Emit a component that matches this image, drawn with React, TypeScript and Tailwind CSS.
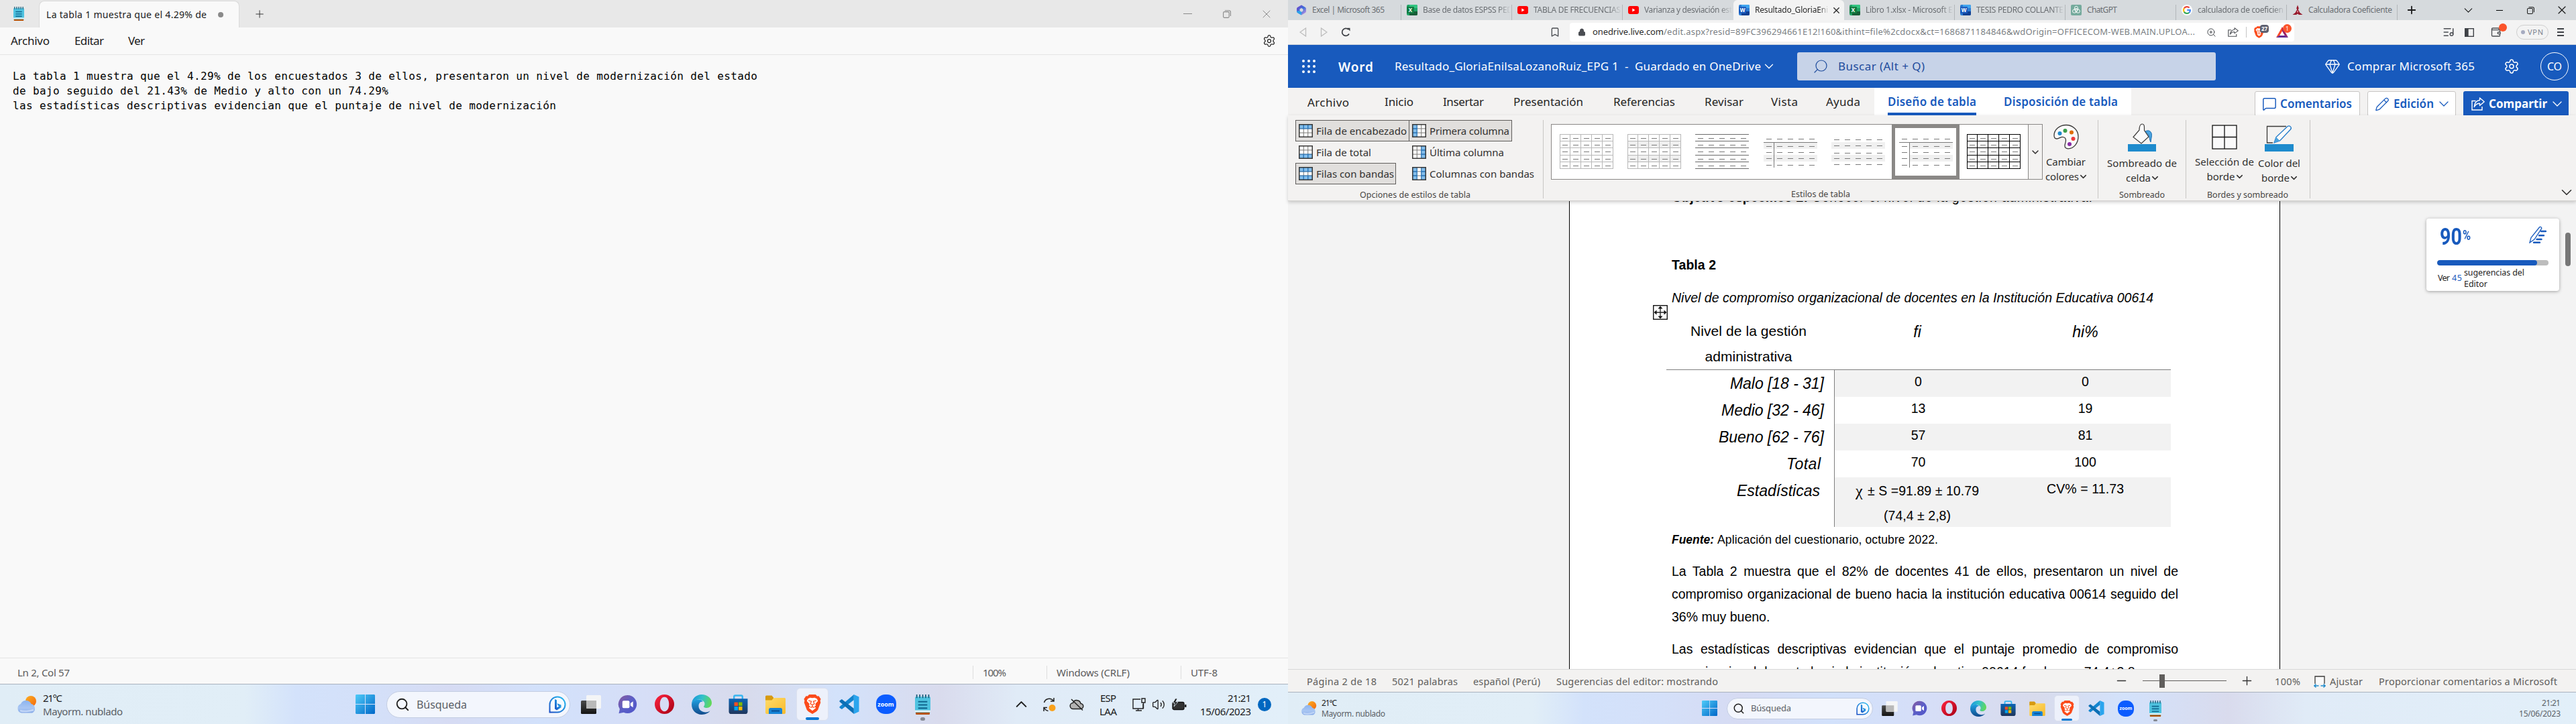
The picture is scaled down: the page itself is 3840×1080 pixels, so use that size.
import { useLayoutEffect, useRef, useState } from "react";
import type { ReactNode } from "react";
import {
  Bookmark,
  ChevronDown,
  ChevronUp,
  Gem,
  ListMusic,
  Lock,
  MessageSquare,
  Minus,
  Pencil,
  Plus,
  Search,
  Settings,
  Wallet,
  X,
  ZoomIn,
  Volume2,
} from "lucide-react";

/** One line of text whose tracking is adjusted so that it spans `w` pixels. */
function Fit({ w, children, className = "" }: { w: number; children: string; className?: string }) {
  const ref = useRef<HTMLSpanElement>(null);
  const [tracking, setTracking] = useState(0);
  useLayoutEffect(() => {
    const el = ref.current;
    if (!el) return;
    const previous = el.style.letterSpacing;
    el.style.letterSpacing = "0px";
    const natural = el.getBoundingClientRect().width;
    el.style.letterSpacing = previous;
    setTracking((w - natural) / Math.max(1, children.length - 1));
  }, [w, children]);
  return (
    <span className={`inline-block shrink-0 whitespace-pre ${className}`} style={{ width: w }}>
      <span ref={ref} style={{ letterSpacing: `${tracking}px` }}>
        {children}
      </span>
    </span>
  );
}

/* ---------- small glyphs ---------- */

function Restore({ className = "" }: { className?: string }) {
  return (
    <svg viewBox="0 0 12 12" className={`shrink-0 ${className}`} fill="none" stroke="currentColor" strokeWidth="1.1">
      <rect x="0.6" y="2.6" width="8.6" height="8.8" rx="1.6" />
      <path d="M2.8 0.7h6.4a2.2 2.2 0 0 1 2.2 2.2v6.2" />
    </svg>
  );
}

function NotepadIcon({ className = "" }: { className?: string }) {
  return (
    <svg viewBox="0 0 22 28" className={`shrink-0 ${className}`} preserveAspectRatio="none">
      <rect x="1" y="24" width="20" height="4" rx="1" fill="#b45309" />
      <rect x="0" y="3" width="22" height="22" rx="1.5" fill="#4fc3e0" />
      <path d="M0 22h22v2.500H0z" fill="#e9f2f5" />
      <path d="M2.500 0v5M6.800 0v5M11 0v5M15.200 0v5M19.500 0v5" stroke="#1b5e7b" strokeWidth="1.700" />
      <path d="M4.500 10h13M4.500 14.500h13M4.500 19h13" stroke="#11678f" strokeWidth="1.900" />
    </svg>
  );
}

function WeatherIcon({ className = "" }: { className?: string }) {
  return (
    <svg viewBox="0 0 30 26" className={`shrink-0 ${className}`}>
      <defs>
        <linearGradient id="sun" x1="0" y1="0" x2="1" y2="1">
          <stop offset="0" stopColor="#fbb024" />
          <stop offset="1" stopColor="#f4660b" />
        </linearGradient>
        <linearGradient id="cloud" x1="0" y1="0" x2="0" y2="1">
          <stop offset="0" stopColor="#8db4ee" />
          <stop offset="0.600" stopColor="#a9c6f3" />
          <stop offset="1" stopColor="#86aae8" />
        </linearGradient>
      </defs>
      <circle cx="21" cy="8" r="8" fill="url(#sun)" />
      <path d="M7 25.500a7 7 0 0 1-1-13.400A8.500 8.500 0 0 1 21.500 12 7.200 7.200 0 0 1 23 25.500z" fill="url(#cloud)" />
      <path d="M5 22c5 2 14 1 20-1" stroke="#d5e4fb" strokeWidth="2.500" fill="none" opacity="0.700" />
    </svg>
  );
}

function WindowsIcon({ className = "" }: { className?: string }) {
  return (
    <svg viewBox="0 0 30 30" className={`shrink-0 ${className}`}>
      <defs>
        <linearGradient id="win" x1="0" y1="0" x2="1" y2="1">
          <stop offset="0" stopColor="#4fcbf8" />
          <stop offset="1" stopColor="#0067c8" />
        </linearGradient>
      </defs>
      <path d="M1 0h13.500v14.500H0V1zM15.500 0H29l1 1v13.500H15.500zM0 15.500h14.500V30H1l-1-1zM15.500 15.500H30V29l-1 1H15.500z" fill="url(#win)" />
    </svg>
  );
}

function BingIcon({ className = "" }: { className?: string }) {
  return (
    <svg viewBox="0 0 26 26" className={`shrink-0 ${className}`}>
      <defs>
        <linearGradient id="bing" x1="0" y1="1" x2="1" y2="0">
          <stop offset="0" stopColor="#1b4fc4" />
          <stop offset="1" stopColor="#28c1f2" />
        </linearGradient>
      </defs>
      <path d="M1.500 24.500V13A11.500 11.500 0 1 1 13 24.500z" fill="#f4faff" stroke="url(#bing)" strokeWidth="2" />
      <path d="M9 5l3 1.200v11.300l3.500-2-1.700-.9-1.300-3.300 6 2.200v3.800L12 21.500l-3-2z" fill="url(#bing)" />
    </svg>
  );
}

function TaskViewIcon({ className = "" }: { className?: string }) {
  return (
    <svg viewBox="0 0 30 28" className={`shrink-0 ${className}`}>
      <defs>
        <linearGradient id="tv" x1="0" y1="0" x2="0" y2="1">
          <stop offset="0" stopColor="#4a4a4a" />
          <stop offset="1" stopColor="#141414" />
        </linearGradient>
      </defs>
      <rect x="0" y="8" width="23" height="20" rx="1.500" fill="url(#tv)" />
      <rect x="8" y="0" width="22" height="20" rx="1.500" fill="#f5f5f5" opacity="0.950" />
      <path d="M8 8h15v12H9.500A1.500 1.500 0 0 1 8 18.500z" fill="#b9b9b9" />
    </svg>
  );
}

function ChatIcon({ className = "" }: { className?: string }) {
  return (
    <svg viewBox="0 0 30 30" className={`shrink-0 ${className}`}>
      <defs>
        <linearGradient id="chat" x1="0" y1="0" x2="1" y2="1">
          <stop offset="0" stopColor="#8a5a9e" />
          <stop offset="0.500" stopColor="#5b5fc7" />
          <stop offset="1" stopColor="#4f54c9" />
        </linearGradient>
      </defs>
      <path d="M15 1a14 14 0 1 1-6 26.600L1.500 29.300 3 22.500A14 14 0 0 1 15 1z" fill="url(#chat)" />
      <rect x="7" y="9.500" width="11" height="11.500" rx="2" fill="#fff" />
      <path d="M19.500 13.500l4-3v9.500l-4-3z" fill="#fff" />
    </svg>
  );
}

function OperaIcon({ className = "" }: { className?: string }) {
  return (
    <svg viewBox="0 0 30 30" className={`shrink-0 ${className}`}>
      <defs>
        <linearGradient id="opera" x1="0" y1="0" x2="1" y2="1">
          <stop offset="0" stopColor="#ff2440" />
          <stop offset="1" stopColor="#a50014" />
        </linearGradient>
      </defs>
      <path
        fillRule="evenodd"
        d="M15 0a15 15 0 1 1 0 30 15 15 0 0 1 0-30zM15 4C10.500 4 8 9 8 15s2.500 11 7 11 7-5 7-11S19.500 4 15 4z"
        fill="url(#opera)"
      />
    </svg>
  );
}

function EdgeIcon({ className = "" }: { className?: string }) {
  return (
    <svg viewBox="0 0 30 30" className={`shrink-0 ${className}`}>
      <defs>
        <linearGradient id="edgeTop" x1="0" y1="0.300" x2="1" y2="0.500">
          <stop offset="0" stopColor="#1a96dc" />
          <stop offset="0.500" stopColor="#33c1c9" />
          <stop offset="1" stopColor="#62d957" />
        </linearGradient>
        <linearGradient id="edgeLow" x1="0" y1="0" x2="0" y2="1">
          <stop offset="0" stopColor="#1f9fe0" />
          <stop offset="1" stopColor="#114a8b" />
        </linearGradient>
      </defs>
      <path d="M15 0c8.500 0 15 5.800 15 12.500 0 4.500-3.500 7.500-7.500 7.500-3.500 0-4.500-1.300-4.500-2 0-.8 1.500-1.500 1.500-4C19.500 10 15 7.500 10.500 7.500 5 7.500.8 11.500 0 15 0 6.500 6.700 0 15 0z" fill="url(#edgeTop)" />
      <path d="M0 15c.5-4.500 5-7.500 10-7.500 3 0 5.500 1.200 7 3-4-.6-6.500 2.500-6.500 6.500 0 6 5 9.500 10.500 9.500 3 0 5.500-1.200 6.500-2.200C25.500 27.500 20.800 30 15 30 6.700 30 0 23.500 0 15z" fill="url(#edgeLow)" />
    </svg>
  );
}

function StoreIcon({ className = "" }: { className?: string }) {
  return (
    <svg viewBox="0 0 30 30" className={`shrink-0 ${className}`}>
      <defs>
        <linearGradient id="store" x1="0" y1="0" x2="0" y2="1">
          <stop offset="0" stopColor="#0b64b5" />
          <stop offset="1" stopColor="#20365c" />
        </linearGradient>
      </defs>
      <path d="M8.500 8V3.500a2 2 0 0 1 2-2h9a2 2 0 0 1 2 2V8" fill="none" stroke="#38b6f1" strokeWidth="2.500" />
      <path d="M.500 6.500h29V26a4 4 0 0 1-4 4h-21a4 4 0 0 1-4-4z" fill="url(#store)" />
      <path d="M8.800 12h5.700v5.700H8.800z" fill="#f25022" />
      <path d="M15.500 12h5.700v5.700h-5.700z" fill="#7fba00" />
      <path d="M8.800 18.700h5.700v5.700H8.800z" fill="#00a4ef" />
      <path d="M15.500 18.700h5.700v5.700h-5.700z" fill="#ffb900" />
    </svg>
  );
}

function FolderIcon({ className = "" }: { className?: string }) {
  return (
    <svg viewBox="0 0 30 28" className={`shrink-0 ${className}`}>
      <defs>
        <linearGradient id="folder" x1="0" y1="0" x2="1" y2="1">
          <stop offset="0" stopColor="#ffdc6b" />
          <stop offset="1" stopColor="#f7ba2c" />
        </linearGradient>
      </defs>
      <path d="M0 2a1.500 1.500 0 0 1 1.500-1.500h8L12 3.500V10H0z" fill="#d79a10" />
      <path d="M0 7.500h9.500l3-3.500H28.500A1.500 1.500 0 0 1 30 5.500V26a2 2 0 0 1-2 2H2a2 2 0 0 1-2-2z" fill="url(#folder)" />
      <path d="M5 28v-6.500A2.500 2.500 0 0 1 7.500 19h15a2.500 2.500 0 0 1 2.500 2.500V28z" fill="#1583d6" />
      <path d="M9 23.500h12" stroke="#0a4c8f" strokeWidth="1.800" />
    </svg>
  );
}

function BraveIcon({ className = "" }: { className?: string }) {
  return (
    <svg viewBox="0 0 26 30" className={`shrink-0 ${className}`}>
      <path d="M8 0h10l2.500 2.700 2.300-.3L26 7l-1 2.500.7 3-4.200 11.300-2.500 2.700L13 30l-6-3.500-2.500-2.700L.3 12.500l.7-3L0 7l3.200-4.600 2.300.3z" fill="#fb4b1b" />
      <path
        d="M13 5.500l3.500-.7 3.700 1.900 1.300 3.300-4 4.500.7 2.500-2.200 2 2.500 1.800L13 25l-5.500-4.200L10 19l-2.200-2 .7-2.500-4-4.500 1.300-3.300 3.700-1.900z"
        fill="#fff"
      />
      <path d="M7 9.500l4.500 1-1.500 4 3 1.500 3-1.500-1.500-4 4.500-1M13 16v3.500M10 20l3-1 3 1" stroke="#fb4b1b" strokeWidth="1.300" fill="none" />
    </svg>
  );
}

function VsCodeIcon({ className = "" }: { className?: string }) {
  return (
    <svg viewBox="0 0 30 30" className={`shrink-0 ${className}`}>
      <path d="M22 0L30 3.500v23L22 30z" fill="#2aa5ee" />
      <path d="M22 0v8.500L3.500 22.800 0 20.500v-1.500z" fill="#1385cf" />
      <path d="M22 30v-8.500L3.500 7.200 0 9.500V11z" fill="#0b6fb5" />
    </svg>
  );
}

function ZoomIcon({ small = false, className = "" }: { small?: boolean; className?: string }) {
  return (
    <span
      className={`flex shrink-0 items-center justify-center rounded-[45%] bg-[#0b5cff] font-['Open_Sans',sans-serif] leading-none font-bold text-white ${small ? "text-[7px]" : "text-[9px]"} ${className}`}
    >
      zoom
    </span>
  );
}

function OfficeIcon({ kind }: { kind: "W" | "X" }) {
  const word = kind === "W";
  return (
    <span className={`relative block h-4 w-4 shrink-0 overflow-hidden rounded-[2px] ${word ? "bg-[#2b7cd3]" : "bg-[#21a366]"}`}>
      <span className={`absolute top-0 right-0 h-[5px] w-3 ${word ? "bg-[#41a5ee]" : "bg-[#33c481]"}`} />
      <span className={`absolute right-0 bottom-0 h-[6px] w-3 ${word ? "bg-[#103f91]" : "bg-[#185c37]"}`} />
      <span
        className={`absolute top-[3px] left-0 flex h-[10px] w-[11px] items-center justify-center rounded-[1px] font-['Open_Sans',sans-serif] text-[8px] leading-none font-bold text-white ${word ? "bg-[#185abd]" : "bg-[#107c41]"}`}
      >
        {kind}
      </span>
    </span>
  );
}

function YouTubeIcon() {
  return (
    <svg viewBox="0 0 16 12" className="h-3 w-4 shrink-0">
      <rect width="16" height="12" rx="3" fill="#ff0000" />
      <path d="M6.300 3.500v5l4.200-2.500z" fill="#fff" />
    </svg>
  );
}

function M365Icon() {
  return (
    <svg viewBox="0 0 16 16" className="h-4 w-4 shrink-0">
      <defs>
        <linearGradient id="m365" x1="0" y1="0" x2="1" y2="1">
          <stop offset="0" stopColor="#7b3fc9" />
          <stop offset="0.500" stopColor="#3b6fd9" />
          <stop offset="1" stopColor="#e39ae0" />
        </linearGradient>
      </defs>
      <path fillRule="evenodd" d="M8 .5l5.500 3.200c1 .6 1.500 1.500 1.500 2.500v3.600c0 1-.5 1.900-1.500 2.500L8 15.500l-5.500-3.200C1.500 11.700 1 10.800 1 9.800V6.200c0-1 .5-1.900 1.500-2.500zM8 5L5.500 6.500v3L8 11l2.500-1.500v-3z" fill="url(#m365)" />
      <path d="M1 9.500l4.500-.2L8 11v4.500l-5.500-3.200C1.500 11.500 1 10.500 1 9.500z" fill="#2ba5ea" />
    </svg>
  );
}

function ChatGptIcon() {
  return (
    <svg viewBox="0 0 16 16" className="h-4 w-4 shrink-0">
      <rect width="16" height="16" rx="2" fill="#74aa9c" />
      <g fill="none" stroke="#fff" strokeWidth="0.900">
        <ellipse cx="8" cy="5.800" rx="2.600" ry="3.600" />
        <ellipse cx="8" cy="5.800" rx="2.600" ry="3.600" transform="rotate(120 8 8)" />
        <ellipse cx="8" cy="5.800" rx="2.600" ry="3.600" transform="rotate(240 8 8)" />
      </g>
    </svg>
  );
}

function GoogleIcon() {
  return (
    <svg viewBox="0 0 16 16" className="h-4 w-4 shrink-0">
      <circle cx="8" cy="8" r="8" fill="#fff" />
      <g fill="none" strokeWidth="2.200">
        <path d="M11.600 4.600A4.900 4.900 0 0 0 3.900 5.300" stroke="#ea4335" />
        <path d="M3.800 5.300a5 5 0 0 0 0 5.300" stroke="#fbbc05" />
        <path d="M3.800 10.600a4.900 4.900 0 0 0 7.400 1.200" stroke="#34a853" />
        <path d="M11.200 11.800A4.900 4.900 0 0 0 12.900 8H8.200" stroke="#4285f4" />
      </g>
    </svg>
  );
}

function RedMarkIcon() {
  return (
    <svg viewBox="0 0 16 16" className="h-4 w-4 shrink-0">
      <path d="M8 .5l1.800 5-1 1.500 2.700 5 4 3H10L8 13.500 6 15H.5l4-3L7.200 7l-1-1.500z" fill="#96192b" />
      <path d="M8 8l1 2.500L8 12l-1-1.500z" fill="#e9a0a8" />
    </svg>
  );
}

/* ---------- Notepad window ---------- */

function Notepad() {
  return (
    <section className="flex h-[1020px] flex-col bg-[#f9f9f9] text-[#1b1b1b]">
      <div className="flex h-[41px] shrink-0 items-center bg-[#e8e8e8]">
        <NotepadIcon className="ml-[20px] h-[21px] w-[16px]" />
        <div className="mt-px ml-[22px] flex h-10 w-[299px] items-center rounded-t-lg border border-b-0 border-[#dadada] bg-[#f9f9f9]">
          <Fit w={239} className="ml-[10px] text-[14px]">La tabla 1 muestra que el 4.29% de</Fit>
          <span className="ml-[17px] h-2 w-2 rounded-full bg-[#8a8a8a]" />
        </div>
        <Plus className="ml-[21px] h-[18px] w-[18px] text-[#333]" strokeWidth={1.3} />
        <div className="mr-[26px] ml-auto flex items-center text-[#8a8a8a]">
          <span className="h-px w-[13px] bg-[#8a8a8a]" />
          <Restore className="ml-[46px] h-3 w-3" />
          <X className="-mr-1 ml-[43px] h-[20px] w-[20px]" strokeWidth={1.2} />
        </div>
      </div>
      <div className="flex h-[41px] shrink-0 items-center border-b border-[#e5e5e5] text-[17px]">
        <Fit w={58} className="ml-[16px]">Archivo</Fit>
        <Fit w={44} className="ml-[37px]">Editar</Fit>
        <Fit w={25} className="ml-[36px]">Ver</Fit>
        <Settings className="mr-[18px] ml-auto h-5 w-5 text-[#222]" strokeWidth={1.5} />
      </div>
      <div className="min-h-0 flex-1 pt-[21px] pl-[19px] font-['DejaVu_Sans_Mono',monospace] text-[16px] leading-[22px] text-black">
        <Fit w={1110} className="block!">
          La tabla 1 muestra que el 4.29% de los encuestados 3 de ellos, presentaron un nivel de modernización del estado
        </Fit>
        <Fit w={560} className="block!">de bajo seguido del 21.43% de Medio y alto con un 74.29%</Fit>
        <Fit w={810} className="block!">las estadísticas descriptivas evidencian que el puntaje de nivel de modernización</Fit>
      </div>
      <div className="flex h-[39px] shrink-0 items-center border-t border-[#e5e5e5] pt-[4px] text-[15px] text-[#5c5c5c]">
        <Fit w={78} className="ml-[26px]">Ln 2, Col 57</Fit>
        <div className="ml-auto flex h-5 w-[110px] items-center border-l border-[#dedede] pl-[14px]">
          <Fit w={35}>100%</Fit>
        </div>
        <div className="flex h-5 w-[200px] items-center border-l border-[#dedede] pl-[14px]">
          <Fit w={109}>Windows (CRLF)</Fit>
        </div>
        <div className="flex h-5 w-[160px] items-center border-l border-[#dedede] pl-[14px]">
          <Fit w={40}>UTF-8</Fit>
        </div>
      </div>
    </section>
  );
}

/* ---------- browser chrome ---------- */

type Tab = { icon: ReactNode; title: string; w: number; active?: boolean; noSep?: boolean };

const tabs: Tab[] = [
  { icon: <M365Icon />, title: "Excel | Microsoft 365", w: 108 },
  { icon: <OfficeIcon kind="X" />, title: "Base de datos ESPSS PED", w: 134 },
  { icon: <YouTubeIcon />, title: "TABLA DE FRECUENCIAS", w: 130 },
  { icon: <YouTubeIcon />, title: "Varianza y desviación est", w: 131, noSep: true },
  { icon: <OfficeIcon kind="W" />, title: "Resultado_GloriaEnil", w: 112, active: true, noSep: true },
  { icon: <OfficeIcon kind="X" />, title: "Libro 1.xlsx - Microsoft E", w: 130 },
  { icon: <OfficeIcon kind="W" />, title: "TESIS PEDRO COLLANTE", w: 130 },
  { icon: <ChatGptIcon />, title: "ChatGPT", w: 45 },
  { icon: <GoogleIcon />, title: "calculadora de coeficien", w: 128 },
  { icon: <RedMarkIcon />, title: "Calculadora Coeficiente", w: 125 },
];

function TabStrip() {
  return (
    <div className="flex h-[30px] shrink-0 items-end bg-[#d6dadd] pl-1 text-[12px] text-[#6b6f73]">
      {tabs.map((t) => (
        <div
          key={t.title}
          className={`flex h-[30px] w-[165px] shrink-0 items-center pl-2 ${t.active ? "rounded-t-md bg-[#f3f3f3] text-[#2b2b2b]" : ""}`}
        >
          {t.icon}
          <div
            className={`ml-2 overflow-hidden ${t.active ? "w-[112px] [mask-image:linear-gradient(to_right,#000_86%,transparent_98%)]" : t.w > 126 ? "w-[131px] [mask-image:linear-gradient(to_right,#000_86%,transparent)]" : "w-[131px]"}`}
          >
            <Fit w={t.w}>{t.title}</Fit>
          </div>
          {t.active && <X className="ml-[2px] h-[15px] w-[15px]" strokeWidth={2.2} />}
          {!t.noSep && <span className="ml-auto h-[23px] w-px self-end bg-[#b3b7ba]" />}
        </div>
      ))}
      <div className="flex h-[30px] flex-1 items-center text-[#1b1b1b]">
        <Plus className="ml-[12px] h-[18px] w-[18px]" strokeWidth={2.4} />
        <ChevronDown className="ml-[65px] h-[21px] w-[21px]" strokeWidth={1.3} />
        <span className="ml-[31px] h-px w-[10px] bg-black" />
        <Restore className="ml-[36px] h-[11px] w-[11px]" />
        <X className="ml-[31px] h-[20px] w-[20px]" strokeWidth={1.4} />
      </div>
    </div>
  );
}

function ShareArrow({ className = "" }: { className?: string }) {
  return (
    <svg viewBox="0 0 20 20" className={`shrink-0 ${className}`} fill="none" stroke="currentColor" strokeWidth="1.400" preserveAspectRatio="none">
      <path d="M6.500 5.500H1v13.500h15v-5" />
      <path d="M12.500 1l6.700 5.800-6.700 5.700V9.300C8.500 9.300 6 11 4.300 14.500c.4-5.500 3.500-9.500 8.200-10z" strokeLinejoin="round" />
    </svg>
  );
}

function Toolbar() {
  return (
    <div className="flex h-[37px] shrink-0 items-center border-b border-[#cfd4da] bg-[#f3f3f3] text-[#4a4d52]">
      <svg viewBox="0 0 42 14" className="ml-[17px] h-[14px] w-[42px] shrink-0" fill="none" stroke="#bdbdbd" strokeWidth="1.300">
        <path d="M9.500 1v12L1 7z" />
        <path d="M32.500 1v12L41 7z" />
      </svg>
      <svg viewBox="0 0 14 14" className="ml-[20px] h-[14px] w-[14px] shrink-0" fill="none" stroke="#3a3d42" strokeWidth="1.700">
        <path d="M12 9.500A5.500 5.500 0 1 1 11 3" />
        <path d="M9 .8l4.500 0v4.700z" fill="#3a3d42" stroke="none" />
      </svg>
      <Bookmark className="ml-[297px] h-4 w-4" strokeWidth={2} />
      <div className="ml-[14px] flex h-7 w-[1080px] shrink-0 items-center rounded bg-white text-[13px]">
        <Lock className="ml-[12px] h-[12px] w-[12px]" fill="#4a4d52" />
        <Fit w={106} className="ml-[10px] text-[#2b2b2b]">onedrive.live.com</Fit>
        <Fit w={792} className="text-[#7b7f84]">
          /edit.aspx?resid=89FC396294661E12!160&ithint=file%2cdocx&ct=1686871184846&wdOrigin=OFFICECOM-WEB.MAIN.UPLOA...
        </Fit>
        <ZoomIn className="ml-[17px] h-[15px] w-[15px]" strokeWidth={1.6} />
        <ShareArrow className="ml-[17px] h-[14px] w-[16px]" />
        <span className="ml-[11px] h-4 w-px bg-[#c4c4c4]" />
        <div className="relative ml-[11px] h-[18px] w-[16px]">
          <BraveIcon className="h-[18px] w-[15px]" />
          <span className="absolute -top-[2px] left-[9px] flex h-[12px] w-[13px] items-center justify-center rounded-[4px] bg-[#5d6070] text-[8px] leading-none font-bold text-white">
            27
          </span>
        </div>
        <div className="relative ml-[17px] h-[16px] w-[18px]">
          <svg viewBox="0 0 18 16" className="h-4 w-[18px]">
            <path d="M9 0L0 16l9-5.500z" fill="#ff4724" />
            <path d="M9 0l9 16-9-5.500z" fill="#9e1f63" />
            <path d="M0 16l9-6 9 6z" fill="#662d91" />
            <path d="M9 6.500l3.800 6.500H5.200z" fill="#fff" />
          </svg>
          <span className="absolute -top-[4px] left-[10px] flex h-[13px] w-[13px] items-center justify-center rounded-full bg-[#fb542b] text-[8px] leading-none text-white">
            1
          </span>
        </div>
      </div>
      <ListMusic className="ml-[221px] h-[18px] w-[18px]" strokeWidth={2} />
      <svg viewBox="0 0 14 13" className="ml-[15px] h-[13px] w-[14px] shrink-0" fill="none" stroke="#3f4247" strokeWidth="1.400">
        <rect x="0.700" y="0.700" width="12.600" height="11.600" />
        <path d="M.7.7h4.300v11.600H.7z" fill="#3f4247" />
      </svg>
      <div className="relative ml-[24px] h-4 w-[17px]">
        <Wallet className="h-4 w-[17px]" strokeWidth={2} />
        <span className="absolute -top-[5px] left-[13px] h-3 w-3 rounded-full bg-[#fb542b]" />
      </div>
      <div className="ml-[22px] flex h-[22px] w-12 shrink-0 items-center rounded-full border border-[#cfcfcf] text-[11px] text-[#7d8390]">
        <span className="ml-[6px] h-[6px] w-[6px] rounded-full bg-[#a6abc0]" />
        <Fit w={23} className="ml-[4px]">VPN</Fit>
      </div>
      <div className="ml-[13px] flex w-[10px] flex-col gap-[3px]">
        <span className="h-[2px] bg-[#3f4247]" />
        <span className="h-[2px] bg-[#3f4247]" />
        <span className="h-[2px] bg-[#3f4247]" />
      </div>
    </div>
  );
}

/* ---------- Word header and ribbon ---------- */

function WordHeader() {
  return (
    <div className="flex h-16 shrink-0 items-center bg-[#185abd] text-white">
      <div className="ml-[21px] grid grid-cols-3 gap-[4px]">
        {Array.from({ length: 9 }, (_, i) => (
          <span key={i} className="h-[4px] w-[4px] rounded-full bg-white" />
        ))}
      </div>
      <Fit w={52} className="mt-[2px] ml-[34px] text-[19px] font-semibold">Word</Fit>
      <Fit w={546} className="ml-[32px] text-[17px]">{"Resultado_GloriaEnilsaLozanoRuiz_EPG 1  -  Guardado en OneDrive"}</Fit>
      <ChevronDown className="ml-px h-[22px] w-[22px]" strokeWidth={1.4} />
      <div className="ml-[31px] flex h-[42px] w-[624px] shrink-0 items-center rounded-[3px] bg-[#c7d3e8] text-[17px] text-[#1d4b9c]">
        <Search className="ml-[23px] h-[24px] w-[24px] -scale-x-100" strokeWidth={1.2} />
        <Fit w={129} className="ml-[14px]">Buscar (Alt + Q)</Fit>
      </div>
      <Gem className="ml-[162px] h-[24px] w-[24px]" strokeWidth={1.3} />
      <Fit w={190} className="ml-[10px] text-[17px]">Comprar Microsoft 365</Fit>
      <Settings className="ml-[43px] h-6 w-6" strokeWidth={1.5} />
      <div className="ml-[31px] flex h-[42px] w-[42px] shrink-0 items-center justify-center rounded-full border border-white">
        <Fit w={22} className="text-[16px]">CO</Fit>
      </div>
    </div>
  );
}

function RibbonTabs() {
  return (
    <div className="flex h-[41px] shrink-0 items-center bg-[#f3f2f1] text-[17px] text-[#252423]">
      <Fit w={62} className="mt-[2px] ml-[29px]">Archivo</Fit>
      <Fit w={43} className="ml-[53px]">Inicio</Fit>
      <Fit w={61} className="ml-[44px]">Insertar</Fit>
      <Fit w={104} className="ml-[44px]">Presentación</Fit>
      <Fit w={92} className="ml-[45px]">Referencias</Fit>
      <Fit w={58} className="ml-[44px]">Revisar</Fit>
      <Fit w={40} className="ml-[41px]">Vista</Fit>
      <Fit w={51} className="ml-[42px]">Ayuda</Fit>
      <div className="ml-[21px] flex h-[41px] w-[383px] shrink-0 bg-white font-semibold text-[#185abd]">
        <div className="ml-[20px] flex h-[41px] items-center border-b-4 border-[#185abd] pt-1">
          <Fit w={132}>Diseño de tabla</Fit>
        </div>
        <div className="ml-[41px] flex h-[41px] items-center">
          <Fit w={170}>Disposición de tabla</Fit>
        </div>
      </div>
      <div className="mt-[7px] ml-[184px] flex h-[38px] w-[157px] shrink-0 items-center rounded-[3px] border border-[#c8c6c4] bg-white font-semibold text-[#185abd]">
        <MessageSquare className="ml-[10px] h-[22px] w-[22px]" strokeWidth={1.6} />
        <Fit w={107} className="ml-[5px]">Comentarios</Fit>
      </div>
      <div className="mt-[7px] ml-[11px] flex h-[38px] w-[132px] shrink-0 items-center rounded-[3px] border border-[#c8c6c4] bg-white font-semibold text-[#185abd]">
        <Pencil className="ml-[10px] h-[23px] w-[22px]" strokeWidth={1.4} />
        <Fit w={60} className="ml-[6px]">Edición</Fit>
        <ChevronDown className="ml-[3px] h-6 w-6" strokeWidth={1.3} />
      </div>
      <div className="mt-[7px] ml-[11px] flex h-[38px] w-[157px] shrink-0 items-center rounded-[3px] bg-[#185abd] font-bold text-white">
        <ShareArrow className="ml-[12px] h-5 w-5" />
        <Fit w={87} className="ml-[6px]">Compartir</Fit>
        <ChevronDown className="ml-[3px] h-6 w-6" strokeWidth={1.3} />
      </div>
    </div>
  );
}

/** 3×3 grid glyph with the highlighted cells listed by index. */
function GridGlyph({ cells }: { cells: number[] }) {
  return (
    <svg viewBox="0 0 21 20" className="h-5 w-[21px] shrink-0">
      <rect x="0.750" y="0.750" width="19.500" height="18.500" fill="#fff" />
      {cells.map((c) => (
        <rect key={c} x={0.75 + (c % 3) * 6.5} y={0.75 + Math.floor(c / 3) * 6.17} width="6.500" height="6.170" fill="#83beec" />
      ))}
      <path d="M7.250 1v18M13.750 1v18M1 6.900h19M1 13.100h19" stroke="#7a7875" strokeWidth="1" />
      {cells.map((c) => (
        <rect key={c} x={0.75 + (c % 3) * 6.5} y={0.75 + Math.floor(c / 3) * 6.17} width="6.500" height="6.170" fill="none" stroke="#1f78c8" strokeWidth="0.900" />
      ))}
      <rect x="0.750" y="0.750" width="19.500" height="18.500" fill="none" stroke="#3b3a39" strokeWidth="1.500" />
    </svg>
  );
}

function Option({ cells, label, w, box }: { cells: number[]; label: string; w: number; box?: string }) {
  return (
    <div className={`flex h-8 items-center border pl-1 ${box ? `border-[#605e5c] bg-[#e1dfdd] ${box}` : "border-transparent"}`}>
      <GridGlyph cells={cells} />
      <Fit w={w} className="ml-[5px]">{label}</Fit>
    </div>
  );
}

type ThumbKind = "grid" | "banded" | "lines" | "column" | "bands" | "columnPlain" | "black";

function Thumb({ kind }: { kind: ThumbKind }) {
  const gridded = kind === "grid" || kind === "banded" || kind === "black" || kind === "lines";
  const ys = gridded ? [6, 16, 26, 37, 47] : kind === "bands" ? [8, 17, 28, 36, 45] : [7, 18, 27, 36, 46];
  const line = kind === "black" ? "#000" : kind === "lines" ? "#6b6b6b" : "#b8b8b8";
  return (
    <svg viewBox="0 0 80 53" className="h-[53px] w-20 shrink-0">
      {kind === "banded" && <path d="M0 10.500h80v10H0zM0 31.500h80v10H0z" fill="#efefef" />}
      {(kind === "column" || kind === "bands") && <path d="M0 12h80v10H0zM0 31h80v10H0z" fill="#f0f0f0" />}
      {kind === "columnPlain" && <path d="M16 12h64v10H16zM16 31h64v10H16z" fill="#f0f0f0" />}
      {gridded && <path d="M0 .5h80M0 10.500h80M0 20.500h80M0 31.500h80M0 41.500h80M0 51.500h80" stroke={line} />}
      {gridded && kind !== "lines" && <path d="M.5 0v52M15.500 0v52M31.500 0v52M47.500 0v52M63.500 0v52M79.500 0v52" stroke={line} />}
      {(kind === "column" || kind === "columnPlain") && <path d="M0 12.500h80M15.500 12v38" stroke="#7a7a7a" />}
      {ys.map((y) => (
        <path key={y} d={`M4 ${y + 0.5}h8M20 ${y + 0.5}h8M36 ${y + 0.5}h8M52 ${y + 0.5}h8M68 ${y + 0.5}h8`} stroke="#7a7a7a" />
      ))}
    </svg>
  );
}

const thumbs: ThumbKind[] = ["grid", "banded", "lines", "column", "bands", "columnPlain", "black"];

function BigButton({ icon, top, topW, bottom, bottomW, className = "" }: { icon: ReactNode; top: string; topW: number; bottom: string; bottomW: number; className?: string }) {
  return (
    <div className={`flex shrink-0 flex-col items-center ${className}`}>
      {icon}
      <Fit w={topW} className="leading-[22px]">{top}</Fit>
      <div className="flex items-center">
        <Fit w={bottomW} className="leading-[22px]">{bottom}</Fit>
        <ChevronDown className="-mr-[3px] -ml-px h-[15px] w-[15px]" strokeWidth={2.4} />
      </div>
    </div>
  );
}

function Ribbon() {
  return (
    <div className="relative z-10 flex h-[128px] shrink-0 border-b border-[#d2d0ce] bg-[#f3f2f1] pt-[7px] text-[15px] text-[#323130] shadow-[0_2px_5px_rgba(0,0,0,0.18)]">
      <div className="ml-[11px] flex w-[369px] shrink-0 flex-col">
        <div className="grid grid-cols-[169px_200px]">
          <Option cells={[0, 1, 2]} label="Fila de encabezado" w={135} box="w-[170px]" />
          <Option cells={[0, 3, 6]} label="Primera columna" w={119} box="w-[154px]" />
          <Option cells={[6, 7, 8]} label="Fila de total" w={82} />
          <Option cells={[2, 5, 8]} label="Última columna" w={111} />
          <Option cells={[0, 1, 2, 6, 7, 8]} label="Filas con bandas" w={116} box="w-[150px]" />
          <Option cells={[0, 3, 6, 2, 5, 8]} label="Columnas con bandas" w={156} />
        </div>
        <Fit w={165} className="mt-[7px] ml-[96px] text-[12.5px] leading-[18px] text-[#484644]">Opciones de estilos de tabla</Fit>
      </div>
      <span className="h-[117px] w-px bg-[#c8c6c4]" />
      <div className="ml-[11px] flex w-[815px] shrink-0 flex-col">
        <div className="flex h-[97px]">
          <div className="mt-[6px] flex h-[83px] w-[733px] shrink-0 items-center border border-[#8a8886] bg-white">
            <div className="flex pl-px">
              {thumbs.map((k, i) => (
                <div
                  key={k}
                  className={`flex h-[81px] items-center justify-center ${i === 5 ? "w-[101px] border-[5px] border-[#8a8886]" : "w-[101.3px]"}`}
                >
                  <Thumb kind={k} />
                </div>
              ))}
            </div>
            <div className="ml-auto flex h-[81px] w-[22px] items-center justify-center border-l border-[#8a8886] bg-[#f3f2f1]">
              <ChevronDown className="h-[16px] w-[16px] shrink-0" strokeWidth={2.3} />
            </div>
          </div>
          <BigButton
            className="ml-[4px] pt-[6px]"
            top="Cambiar"
            topW={59}
            bottom="colores"
            bottomW={50}
            icon={
              <svg viewBox="0 0 38 38" className="mb-[7px] h-[38px] w-[38px]">
                <path
                  d="M19 1.500C9 1.500 1 8.500 1 17c0 3 1.500 5 4 5 3.500 0 5-2.700 8.500-2.700 3 0 5 2.200 5 5 0 3.500-1.500 5-1.500 8 0 2.500 1.700 4.500 5 4.500 8.500 0 15-8.500 15-18S29 1.500 19 1.500z"
                  fill="#fafafa"
                  stroke="#3b3a39"
                  strokeWidth="1.300"
                />
                <circle cx="9.500" cy="14" r="3" fill="#1e8bcd" />
                <circle cx="17.500" cy="10" r="3" fill="#3a9d4a" />
                <circle cx="27" cy="12.500" r="3" fill="#e06c00" />
                <circle cx="29.500" cy="22" r="3" fill="#ee3b3b" />
                <circle cx="24" cy="30" r="3" fill="#8a2da5" />
              </svg>
            }
          />
        </div>
        <Fit w={88} className="mt-[6px] ml-[358px] text-[12.5px] leading-[18px] text-[#484644]">Estilos de tabla</Fit>
      </div>
      <span className="h-[117px] w-px bg-[#c8c6c4]" />
      <div className="flex w-[130px] shrink-0 flex-col items-center">
        <BigButton
          className="pt-[5px]"
          top="Sombreado de"
          topW={104}
          bottom="celda"
          bottomW={37}
          icon={
            <svg viewBox="0 0 42 42" className="mb-[6px] h-[42px] w-[42px]">
              <path d="M8 20.500l9-10.500c0-4 1-9 4.500-9s3 4 3 9.500l6.500 9.500L20 30z" fill="#fafafa" stroke="#3b3a39" strokeWidth="1.200" />
              <path d="M26 12c5-3 10 0 9.500 6.500L34 28c-2-3-1.500-8-3.500-11z" fill="#4aa3df" stroke="#1f6fb0" />
              <rect y="31" width="42" height="11" fill="#1e8bcd" />
            </svg>
          }
        />
        <Fit w={68} className="mt-[6px] text-[12.5px] leading-[18px] text-[#484644]">Sombreado</Fit>
      </div>
      <span className="h-[117px] w-px bg-[#c8c6c4]" />
      <div className="flex w-[184px] shrink-0 flex-col">
        <div className="flex h-[97px] pl-[13px]">
          <BigButton
            className="pt-[7px]"
            top="Selección de"
            topW={88}
            bottom="borde"
            bottomW={42}
            icon={
              <svg viewBox="0 0 38 37" className="mb-[7px] h-[37px] w-[38px]" fill="#fafafa" stroke="#111" strokeWidth="1.300">
                <rect x="1" y="1" width="36" height="35" />
                <path d="M19 1v35M1 18.500h36" />
              </svg>
            }
          />
          <BigButton
            className="ml-[6px] pt-[5px]"
            top="Color del"
            topW={63}
            bottom="borde"
            bottomW={42}
            icon={
              <svg viewBox="0 0 43 42" className="mb-[6px] h-[42px] w-[43px]" fill="none">
                <path d="M32 4.500H3.500V29H12" stroke="#3b3a39" strokeWidth="1.300" />
                <path d="M14 29l3-8.500L34 4.500c3-2 7 1.500 4.500 4.500L22.500 26z" fill="#fafafa" stroke="#1f78c8" strokeWidth="1.300" />
                <path d="M14 29l3-8.500 5.500 5.500z" fill="#4aa3df" />
                <rect y="31" width="43" height="11" fill="#1e8bcd" />
              </svg>
            }
          />
        </div>
        <Fit w={121} className="mt-[6px] ml-[31px] text-[12.5px] leading-[18px] text-[#484644]">Bordes y sombreado</Fit>
      </div>
      <span className="h-[117px] w-px bg-[#c8c6c4]" />
      <ChevronDown className="mr-px -mb-[1px] ml-auto h-[26px] w-[26px] self-end" strokeWidth={1.5} />
    </div>
  );
}

/* ---------- document ---------- */

const rows = [
  { label: "Malo [18 - 31]", w: 140, fi: "0", hi: "0" },
  { label: "Medio [32 - 46]", w: 153, fi: "13", hi: "19" },
  { label: "Bueno [62 - 76]", w: 157, fi: "57", hi: "81" },
  { label: "Total", w: 51, fi: "70", hi: "100" },
];

function StyledTable() {
  return (
    <div className="mt-[14px] -ml-[8px] w-[752px]">
      <div className="flex h-[77px] border-b border-[#7f7f7f]">
        <div className="flex w-[249px] flex-col items-center text-[21px] leading-[38px]">
          <Fit w={173} className="-ml-[4px]">Nivel de la gestión</Fit>
          <Fit w={130} className="-ml-[4px]">administrativa</Fit>
        </div>
        <div className="w-[250px] text-center text-[23px] leading-[41px] italic">fi</div>
        <div className="w-[251px] text-center text-[23px] leading-[41px] italic">hi%</div>
      </div>
      {rows.map((r, i) => (
        <div key={r.label} className="flex h-10">
          <div className={`flex w-[251px] items-center justify-end border-r border-[#7f7f7f] text-[23px] italic ${r.label === "Total" ? "pr-[20px]" : "pr-[15px]"}`}>
            <Fit w={r.w}>{r.label}</Fit>
          </div>
          <div className={`grid flex-1 grid-cols-2 pr-[3px] text-center text-[19.5px] leading-[34px] ${i % 2 === 0 ? "bg-[#f2f2f2]" : ""}`}>
            <span>{r.fi}</span>
            <span>{r.hi}</span>
          </div>
        </div>
      ))}
      <div className="flex h-[74px]">
        <div className="flex w-[251px] justify-end border-r border-[#7f7f7f] pr-[21px] text-[23px] leading-[40px] italic">
          <Fit w={124}>Estadísticas</Fit>
        </div>
        <div className="grid flex-1 grid-cols-2 bg-[#f2f2f2] pr-[3px] text-[19.5px]">
          <div className="flex flex-col items-center pt-[2px] pr-[3px] leading-[37px]">
            <div className="flex">
              <span className="mr-[4px] w-[14px] font-['Liberation_Serif',serif] text-[24px]">χ</span>
              <Fit w={166}>± S =91.89 ± 10.79</Fit>
            </div>
            <Fit w={100}>(74,4 ± 2,8)</Fit>
          </div>
          <div className="text-center leading-[34px]">
            <Fit w={115}>CV% = 11.73</Fit>
          </div>
        </div>
      </div>
    </div>
  );
}

function EditorCard() {
  return (
    <div className="absolute top-[26px] left-[1697px] h-[108px] w-[198px] rounded bg-white px-4 font-['Noto_Sans',sans-serif] shadow-[0_1px_5px_rgba(0,0,0,0.35)]">
      <div className="flex h-[62px] justify-between">
        <div className="ml-[4px] flex font-['Roboto',sans-serif] font-bold text-[#185abd]">
          <span className="mt-[8px] w-[34px] origin-left scale-x-[0.82] text-[35px] leading-[40px]">90</span>
          <span className="mt-[14px] w-[14px] origin-left scale-x-[0.78] text-[21px] leading-[22px]">%</span>
        </div>
        <svg viewBox="0 0 26 26" className="mt-[11px] mr-[3px] h-[26px] w-[26px]" fill="none" stroke="#185abd">
          <path d="M1 25l2-7.500L15.500 2c1.300-1.600 4 .1 3 2.200L8 20z" strokeWidth="1.300" />
          <path d="M18 8h7M15 14.300h7M11.500 20h7M7 24.700h9" strokeWidth="2.400" strokeLinecap="round" />
        </svg>
      </div>
      <div className="h-2 w-[166px] overflow-hidden rounded-full bg-[#bdbdbd]">
        <div className="h-2 w-[149px] rounded-full bg-[#185abd]" />
      </div>
      <div className="mt-[3px] flex items-center pl-px text-[12.5px] leading-[16.5px] text-[#252423]">
        <Fit w={18}>Ver</Fit>
        <Fit w={15} className="ml-[3px] text-[#185abd]">45</Fit>
        <div className="ml-[3px] flex flex-col">
          <Fit w={90}>sugerencias del</Fit>
          <Fit w={35}>Editor</Fit>
        </div>
      </div>
    </div>
  );
}

function DocumentArea() {
  return (
    <div className="relative min-h-0 flex-1 overflow-hidden bg-[#f3f3f3] font-['Liberation_Sans',Arial,sans-serif] text-[19.5px] text-black">
      <div className="ml-[419px] h-[760px] w-[1060px] border-x border-black bg-white pr-[151px] pl-[152px]">
        <div className="-mt-[23px] flex h-[34px] leading-[34px]">
          <Fit w={203} className="font-bold">Objetivo específico 2:</Fit>
          <Fit w={418} className="ml-[6px]">Conocer el nivel de la gestión administrativa.</Fit>
        </div>
        <div className="mt-[67px] h-[34px] leading-[34px]">
          <Fit w={66} className="font-bold">Tabla 2</Fit>
        </div>
        <div className="relative mt-[15px] h-[34px] leading-[34px]">
          <Fit w={718} className="italic">Nivel de compromiso organizacional de docentes en la Institución Educativa 00614</Fit>
          <svg viewBox="0 0 22 22" className="absolute top-[28px] -left-[28px] h-[22px] w-[22px]">
            <rect x="0.750" y="0.750" width="20.500" height="20.500" fill="#fff" stroke="#000" strokeWidth="1.300" />
            <path d="M11 4v14M4 11h14" stroke="#222" strokeWidth="1.300" />
            <path d="M11 1.500l3.500 4h-7zM11 20.500l3.500-4h-7zM1.500 11l4-3.500v7zM20.500 11l-4-3.500v7z" fill="#111" />
          </svg>
        </div>
        <StyledTable />
        <div className="mt-[4px] flex h-[30px] text-[17.5px] leading-[30px]">
          <Fit w={63} className="font-bold italic">Fuente:</Fit>
          <Fit w={329} className="ml-[5px]">Aplicación del cuestionario, octubre 2022.</Fit>
        </div>
        <div className="mt-[15px] w-[755px] leading-[34px] whitespace-nowrap">
          <p className="[text-align-last:justify]">La Tabla 2 muestra que el 82% de docentes 41 de ellos, presentaron un nivel de</p>
          <p className="[text-align-last:justify]">compromiso organizacional de bueno hacia la institución educativa 00614 seguido del</p>
          <p>36% muy bueno.</p>
        </div>
        <div className="mt-[14px] w-[755px] leading-[34px] whitespace-nowrap">
          <p className="[text-align-last:justify]">Las estadísticas descriptivas evidencian que el puntaje promedio de compromiso</p>
          <Fit w={755} className="block!">organizacional docente hacia la institución educativa 00614 fue bueno 74.4±2.8 con un</Fit>
        </div>
      </div>
      <EditorCard />
      <div className="absolute top-[47px] left-[1904px] h-[50px] w-2 rounded-full bg-[#777]" />
    </div>
  );
}

function WordStatus() {
  return (
    <div className="flex h-[34px] shrink-0 items-center border-t border-[#d8d8d8] bg-[#f3f2f1] pt-[2px] text-[14.5px] text-[#605e5c]">
      <Fit w={104} className="ml-[28px]">Página 2 de 18</Fit>
      <Fit w={98} className="ml-[23px]">5021 palabras</Fit>
      <Fit w={100} className="ml-[23px]">español (Perú)</Fit>
      <Fit w={241} className="ml-[24px]">Sugerencias del editor: mostrando</Fit>
      <Minus className="-mt-[2px] ml-[591px] h-[21px] w-[21px] text-[#333]" strokeWidth={1.6} />
      <div className="relative -mt-[2px] ml-[21px] flex h-5 w-[125px] items-center">
        <span className="h-px w-full bg-[#605e5c]" />
        <span className="absolute top-0 left-[25px] h-5 w-2 bg-[#605e5c]" />
      </div>
      <Plus className="-mt-[2px] ml-[20px] h-[21px] w-[21px] text-[#333]" strokeWidth={1.5} />
      <Fit w={38} className="ml-[31px]">100%</Fit>
      <svg viewBox="0 0 18 18" className="ml-[20px] h-[18px] w-[18px] shrink-0" fill="none">
        <path d="M2 12V1h14v11" fill="#fafafa" stroke="#3b3a39" strokeWidth="1.300" />
        <path d="M0.500 15h7M10.500 15h7M3.500 12.500L.8 15l2.700 2.500M14.500 12.500l2.700 2.500-2.700 2.500" stroke="#1e8bcd" strokeWidth="1.300" />
      </svg>
      <Fit w={49} className="ml-[6px]">Ajustar</Fit>
      <Fit w={266} className="ml-[24px]">Proporcionar comentarios a Microsoft</Fit>
    </div>
  );
}

/* ---------- taskbars ---------- */

const taskbarBg =
  "bg-[linear-gradient(90deg,#e0edf6_0%,#e1eef7_19%,#d3e2fb_23%,#d4e0f9_29%,#d6dbf3_35%,#d2e1fb_42%,#d6def7_50%,#d8dbec_58%,#d3e2fb_65%,#d9dbed_73%,#e0ebf7_79%,#e2eff9_100%)]";

function LargeTaskbar() {
  const cell = "flex h-[49px] w-[55px] shrink-0 items-center justify-center";
  return (
    <div className={`flex h-[60px] items-center border-t border-[#a9b2be] text-[15px] text-[#5b5f66] ${taskbarBg}`}>
      <WeatherIcon className="ml-[25px] h-[26px] w-[30px]" />
      <div className="ml-[9px] flex flex-col leading-5">
        <Fit w={29} className="text-[#1b1b1b]">21°C</Fit>
        <Fit w={119}>Mayorm. nublado</Fit>
      </div>
      <WindowsIcon className="ml-[347px] h-[29px] w-[29px]" />
      <div className="ml-[17px] flex h-10 w-[274px] shrink-0 items-center rounded-full border border-[#c3cde2] bg-[#f3f6fd]">
        <Search className="ml-[12px] h-[22px] w-[22px] text-[#1f1f1f]" strokeWidth={2} />
        <Fit w={75} className="ml-[10px] text-[16px]">Búsqueda</Fit>
        <BingIcon className="mr-[5px] ml-auto h-[26px] w-[26px]" />
      </div>
      <div className="ml-[3px] flex">
        <span className={cell}><TaskViewIcon className="h-[28px] w-[30px]" /></span>
        <span className={cell}><ChatIcon className="h-[29px] w-[29px]" /></span>
        <span className={cell}><OperaIcon className="h-[29px] w-[29px]" /></span>
        <span className={cell}><EdgeIcon className="h-[30px] w-[30px]" /></span>
        <span className={cell}><StoreIcon className="h-[29px] w-[29px]" /></span>
        <span className={cell}><FolderIcon className="h-[28px] w-[30px]" /></span>
        <span className={cell}>
          <span className="relative flex h-[49px] w-12 items-center justify-center rounded-md border border-[#dbe0ee] bg-[#edf1fb]">
            <BraveIcon className="h-[29px] w-[26px]" />
            <span className="absolute bottom-0 h-1 w-5 rounded-full bg-[#0078d4]" />
          </span>
        </span>
        <span className={cell}><VsCodeIcon className="h-[29px] w-[30px]" /></span>
        <span className={cell}><ZoomIcon className="h-[29px] w-[30px]" /></span>
        <span className={`relative ${cell}`}>
          <NotepadIcon className="h-[30px] w-[23px]" />
          <span className="absolute bottom-0 h-[5px] w-[7px] rounded-full bg-[#858992]" />
        </span>
      </div>
      <ChevronUp className="ml-[106px] h-[27px] w-[27px] text-[#1b1b1b]" strokeWidth={1.8} />
      <svg viewBox="0 0 20 22" className="ml-[18px] h-[22px] w-5 shrink-0" fill="none" stroke="#222" strokeWidth="1.500">
        <path d="M2.500 8C4 2 12 0 16.500 5.500M17 1v5h-5M2 21v-5.500h5M2.500 16c1 2 3 4 6 4.500" />
        <circle cx="14.500" cy="16" r="5" fill="#f9a11b" stroke="none" />
      </svg>
      <svg viewBox="0 0 22 20" className="ml-[20px] h-5 w-[22px] shrink-0" fill="none" stroke="#222" strokeWidth="1.500">
        <path d="M6 16.500a4.500 4.500 0 0 1-.5-9A6 6 0 0 1 17 8.500a4 4 0 0 1-.5 8z" fill="#b3b3b3" />
        <path d="M3 2l17 16.500" />
      </svg>
      <div className="ml-[23px] flex flex-col items-center leading-5 text-[#1b1b1b]">
        <Fit w={24}>ESP</Fit>
        <Fit w={26}>LAA</Fit>
      </div>
      <svg viewBox="0 0 22 20" className="ml-[22px] h-5 w-[22px] shrink-0" fill="none" stroke="#222" strokeWidth="1.400">
        <path d="M13 2H2v14h15V9M6 19h9M9.500 16v3" />
        <path d="M15 1h5v6h-5zM17.500 7v9" />
      </svg>
      <Volume2 className="ml-[8px] h-5 w-5 text-[#222]" strokeWidth={1.6} />
      <svg viewBox="0 0 22 18" className="ml-[10px] h-[18px] w-[22px] shrink-0">
        <rect x="1" y="5.500" width="17" height="11" rx="2" fill="#333" stroke="#111" strokeWidth="1.300" />
        <rect x="19" y="9" width="2.500" height="4" fill="#222" />
        <path d="M5 0L1.500 6.500h3L3 12l6-7H5.500L8 0z" fill="#111" stroke="#e2eff9" strokeWidth="0.800" />
      </svg>
      <div className="mr-[10px] ml-auto flex flex-col items-end leading-5 text-[#1b1b1b]">
        <Fit w={35}>21:21</Fit>
        <Fit w={76}>15/06/2023</Fit>
      </div>
      <span className="mr-[25px] flex h-5 w-5 shrink-0 items-center justify-center rounded-full bg-[#0067c0] text-[12px] leading-none text-white">1</span>
    </div>
  );
}

function SmallTaskbar() {
  const cell = "flex h-[38px] w-11 shrink-0 items-center justify-center";
  return (
    <div className={`flex h-[48px] items-center border-t border-[#a9b2be] text-[12px] text-[#5b5f66] ${taskbarBg}`}>
      <WeatherIcon className="ml-[19px] h-[21px] w-6" />
      <div className="ml-[7px] flex flex-col leading-4">
        <Fit w={23} className="text-[#1b1b1b]">21°C</Fit>
        <Fit w={95}>Mayorm. nublado</Fit>
      </div>
      <WindowsIcon className="ml-[472px] h-[23px] w-[23px]" />
      <div className="ml-[14px] flex h-8 w-[218px] shrink-0 items-center rounded-full border border-[#c3cde2] bg-[#f3f6fd]">
        <Search className="ml-[8px] h-[18px] w-[18px] text-[#1f1f1f]" strokeWidth={2} />
        <Fit w={60} className="ml-[9px] text-[13px]">Búsqueda</Fit>
        <BingIcon className="mr-[4px] ml-auto h-[20px] w-[20px]" />
      </div>
      <div className="ml-[3px] flex">
        <span className={cell}><TaskViewIcon className="h-[22px] w-6" /></span>
        <span className={cell}><ChatIcon className="h-[23px] w-[23px]" /></span>
        <span className={cell}><OperaIcon className="h-[23px] w-[23px]" /></span>
        <span className={cell}><EdgeIcon className="h-6 w-6" /></span>
        <span className={cell}><StoreIcon className="h-[23px] w-[23px]" /></span>
        <span className={cell}><FolderIcon className="h-[22px] w-6" /></span>
        <span className={cell}>
          <span className="relative flex h-[39px] w-[38px] items-center justify-center rounded-[5px] border border-[#dbe0ee] bg-[#edf1fb]">
            <BraveIcon className="h-[23px] w-[21px]" />
            <span className="absolute bottom-0 h-[3px] w-4 rounded-full bg-[#0078d4]" />
          </span>
        </span>
        <span className={cell}><VsCodeIcon className="h-[23px] w-6" /></span>
        <span className={cell}><ZoomIcon small className="h-6 w-6" /></span>
        <span className={`relative ${cell}`}>
          <NotepadIcon className="h-6 w-[18px]" />
          <span className="absolute bottom-0 h-[3px] w-[6px] rounded-full bg-[#858992]" />
        </span>
      </div>
      <div className="mr-[23px] ml-auto flex flex-col items-end leading-4">
        <Fit w={28}>21:21</Fit>
        <Fit w={62}>15/06/2023</Fit>
      </div>
    </div>
  );
}

export default function App() {
  return (
    <main className="flex h-[1080px] w-[3840px] overflow-hidden font-['Noto_Sans','Open_Sans',sans-serif]">
      <div className="flex w-[1920px] shrink-0 flex-col">
        <Notepad />
        <LargeTaskbar />
      </div>
      <div className="flex w-[1920px] shrink-0 flex-col">
        <section className="flex h-[1032px] flex-col">
          <TabStrip />
          <Toolbar />
          <WordHeader />
          <RibbonTabs />
          <Ribbon />
          <DocumentArea />
          <WordStatus />
        </section>
        <SmallTaskbar />
      </div>
    </main>
  );
}
